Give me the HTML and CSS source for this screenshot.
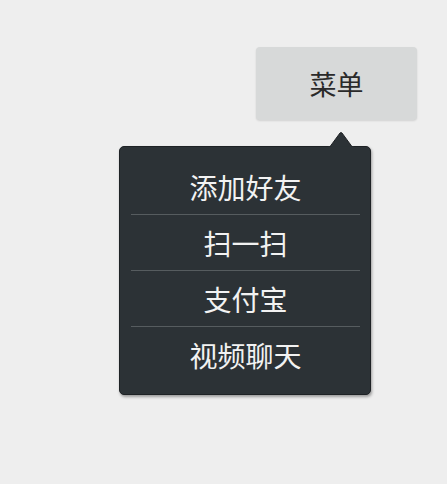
FILE: index.html
```html
<!DOCTYPE html>
<html lang="zh">
<head>
<meta charset="utf-8">
<link rel="stylesheet" href="styles.css">
</head>
<body>
<div class="stage">
  <button class="menu-btn">菜单</button>
  <div class="popup">
    <svg class="arrow" width="26" height="17" viewBox="0 0 26 17"><path d="M1 17 L12 2 L13 1.6 L14 2 L25 17 Z" fill="#2c3236" stroke="#1e2225" stroke-width="1"/><rect x="0" y="15.6" width="26" height="2" fill="#2c3236"/></svg>
    <ul class="items">
      <li class="item">添加好友</li>
      <li class="item">扫一扫</li>
      <li class="item">支付宝</li>
      <li class="item">视频聊天</li>
    </ul>
  </div>
</div>
</body>
</html>
```
FILE: styles.css
```css
html, body {
  margin: 0;
  padding: 0;
  background: #eeeeee;
  width: 447px;
  height: 484px;
  overflow: hidden;
  font-family: "Noto Sans CJK SC", "Noto Sans", sans-serif;
}
.stage {
  display: flex;
  flex-direction: column;
  align-items: flex-start;
  padding-top: 47px;
}
.menu-btn {
  margin-left: 256px;
  width: 161px;
  height: 73px;
  border: none;
  border-radius: 4px;
  background: #d7d9d9;
  box-shadow: 0 1px 2px rgba(0,0,0,0.12);
  color: #2a2a2a;
  font-family: inherit;
  font-size: 27px;
  padding: 0;
  line-height: 1;
}
.popup {
  position: relative;
  margin-left: 119px;
  margin-top: 26px;
  width: 250px;
  height: 247px;
  background: #2c3236;
  border: 1px solid #1e2225;
  border-radius: 5px;
  box-shadow: 1px 2px 3px rgba(0,0,0,0.35);
}
.arrow {
  position: absolute;
  left: 208px;
  top: -16px;
  display: block;
}
.items {
  list-style: none;
  margin: 0;
  padding: 12px 10px 0 11px;
}
.item {
  height: 55px;
  border-bottom: 1px solid #565c5f;
  display: flex;
  align-items: center;
  justify-content: center;
  color: #f2f2f2;
  font-size: 28px;
  line-height: 1;
}
.item:last-child {
  border-bottom: none;
  height: 56px;
}
```
